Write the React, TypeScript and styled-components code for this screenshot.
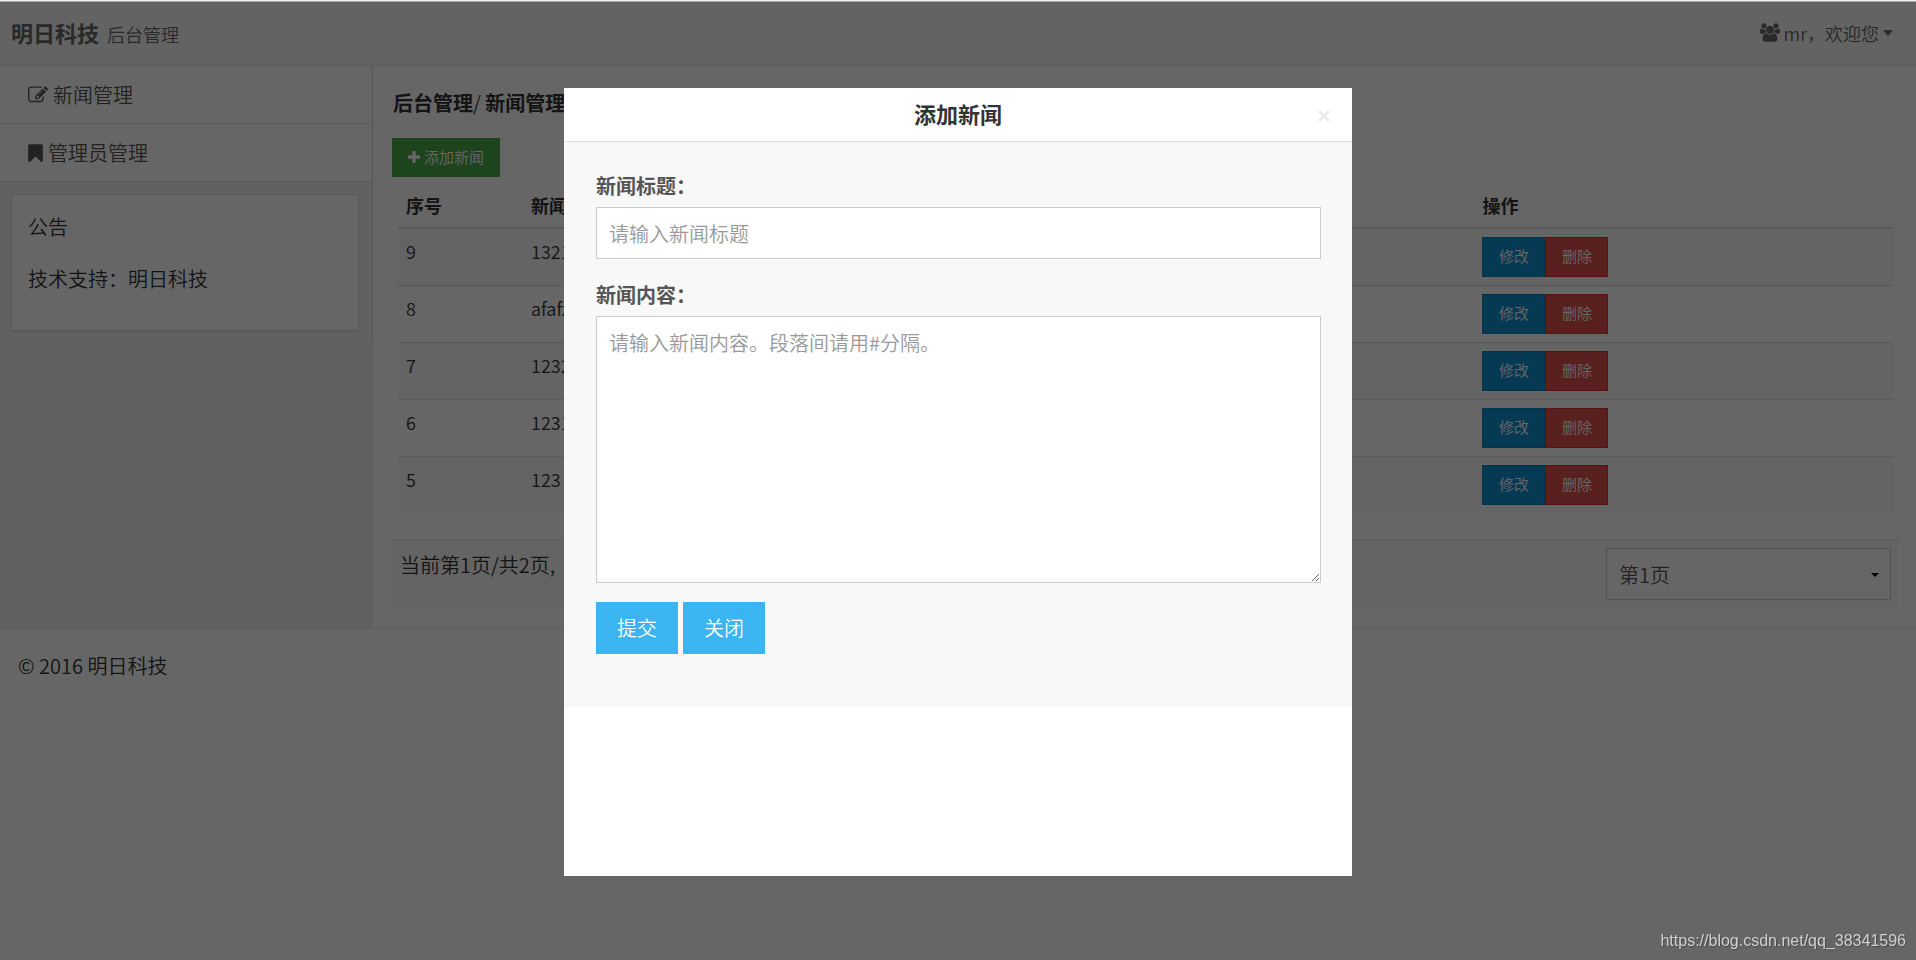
import React from 'react';
import styled, { createGlobalStyle } from 'styled-components';

const GlobalStyle = createGlobalStyle`
  *, *::before, *::after { box-sizing: border-box; }
  body {
    margin: 0;
    background: #fff;
    color: #333;
    font-family: "Noto Sans CJK SC", "Open Sans", sans-serif;
    font-size: 20px;
    font-weight: 350;
    line-height: 32px;
  }
  a { color: inherit; text-decoration: none; }
  button, input, textarea, select { font: inherit; border-radius: 0; }
`;

/* ---------- icons ---------- */

const Svg = styled.svg<{ $w: number; $h: number }>`
  width: ${p => p.$w}px;
  height: ${p => p.$h}px;
  fill: currentColor;
  flex: none;
`;

const EditIcon = () => (
  <Svg $w={20} $h={20} viewBox="0 0 1792 1792" aria-hidden="true">
    <path d="M888 1184l116-116-152-152-116 116v56h96v96h56zm440-720q-16-16-33 1l-350 350q-17 17-1 33t33-1l350-350q17-17 1-33zm80 594v190q0 119-84.500 203.500t-203.500 84.500h-832q-119 0-203.500-84.500t-84.500-203.500v-832q0-119 84.500-203.500t203.500-84.500h832q63 0 117 25 15 7 18 23 3 17-9 29l-49 49q-14 14-32 8-23-6-45-6h-832q-66 0-113 47t-47 113v832q0 66 47 113t113 47h832q66 0 113-47t47-113v-126q0-13 9-22l64-64q15-15 35-7t20 29zm-96-738l288 288-672 672h-288v-288zm444 132l-92 92-288-288 92-92q28-28 68-28t68 28l152 152q28 28 28 68t-28 68z" />
  </Svg>
);

const BookmarkIcon = () => (
  <Svg $w={15} $h={18} viewBox="256 100 1280 1560" aria-hidden="true">
    <path d="M1420 128q23 0 44 9 33 13 52.500 41t19.500 62v1289q0 34-19.500 62t-52.500 41q-19 8-44 8-48 0-83-32l-441-424-441 424q-36 33-83 33-23 0-44-9-33-13-52.500-41t-19.500-62v-1289q0-34 19.500-62t52.500-41q21-9 44-9h1048z" />
  </Svg>
);

const PlusIcon = () => (
  <Svg $w={12} $h={12} viewBox="192 128 1408 1408" aria-hidden="true">
    <path d="M1600 736v192q0 40-28 68t-68 28h-416v416q0 40-28 68t-68 28h-192q-40 0-68-28t-28-68v-416h-416q-40 0-68-28t-28-68v-192q0-40 28-68t68-28h416v-416q0-40 28-68t68-28h192q40 0 68 28t28 68v416h416q40 0 68 28t28 68z" />
  </Svg>
);

const UsersIcon = () => (
  <Svg $w={20} $h={19} viewBox="-64 0 1920 1792" aria-hidden="true">
    <path d="M529 896q-162 5-265 128h-134q-82 0-138-40.500t-56-118.500q0-353 124-353 6 0 43.500 21t97.500 42.500 119 21.500q67 0 133-23-5 37-5 66 0 139 81 256zm1071 637q0 120-73 189.500t-194 69.500h-874q-121 0-194-69.500t-73-189.500q0-53 3.500-103.500t14-109 26.500-108.500 43-97.500 62-81 85.500-53.500 111.500-20q10 0 43 21.500t73 48 107 48 135 21.500 135-21.500 107-48 73-48 43-21.500q61 0 111.500 20t85.500 53.500 62 81 43 97.500 26.500 108.500 14 109 3.500 103.500zm-1024-1277q0 106-75 181t-181 75-181-75-75-181 75-181 181-75 181 75 75 181zm704 384q0 159-112.500 271.500t-271.500 112.500-271.500-112.500-112.500-271.500 112.500-271.500 271.500-112.500 271.500 112.500 112.500 271.500zm576 225q0 78-56 118.500t-138 40.500h-134q-103-123-265-128 81-117 81-256 0-29-5-66 66 23 133 23 59 0 119-21.500t97.500-42.500 43.500-21q124 0 124 353zm-128-609q0 106-75 181t-181 75-181-75-75-181 75-181 181-75 181 75 75 181z" />
  </Svg>
);

const CaretIcon = ({ w, h }: { w: number; h: number }) => (
  <Svg $w={w} $h={h} viewBox="0 0 10 6" preserveAspectRatio="none" aria-hidden="true">
    <path d="M0 0h10L5 6z" />
  </Svg>
);

const CloseIcon = () => (
  <Svg $w={12} $h={12} viewBox="0 0 12 12" aria-hidden="true">
    <path d="M1 1l10 10M11 1L1 11" stroke="currentColor" strokeWidth="3" />
  </Svg>
);

/* ---------- page frame ---------- */

const TopStrip = styled.div`
  position: relative;
  z-index: 20;
  height: 2px;
  background: #f1f1f1;
  border-bottom: 1px solid #aaa;
`;

const Header = styled.header`
  display: flex;
  align-items: center;
  justify-content: space-between;
  height: 64px;
  padding: 0 23px 2px 11px;
  background: #f8f8f8;
  border-bottom: 1px solid #dedede;
  color: #666;
`;

const Brand = styled.div`
  display: flex;
  align-items: baseline;
  gap: 8px;
  font-size: 18px;
  strong { font-size: 22px; font-weight: 700; }
`;

const UserMenu = styled.a`
  display: flex;
  align-items: center;
  gap: 4px;
  font-size: 18px;
  line-height: 30px;
`;

const Columns = styled.div`
  display: flex;
  border-bottom: 1px solid #eee;
`;

const Sidebar = styled.aside`
  flex: none;
  width: 373px;
  background: #f3f3f3;
`;

const SidebarInner = styled.div`
  padding-bottom: 12px;
  border-right: 1px solid #d4d4d4;
`;

const Menu = styled.ul`
  margin: 0;
  padding: 0;
  list-style: none;
`;

const MenuLink = styled.a`
  display: flex;
  align-items: center;
  gap: 5px;
  height: 58px;
  padding: 0 28px;
  background: #fff;
  border-bottom: 1px solid #dedede;
  color: #555;
`;

const Notice = styled.section`
  margin: 12px 13px 0 11px;
  padding: 16px;
  height: 137px;
  background: #fff;
  border: 1px solid #dedede;
  box-shadow: 0 1px 1px rgba(0, 0, 0, 0.05);
  p { margin: 0 0 20px; }
`;

const Main = styled.main`
  flex: 1;
  min-width: 0;
  padding: 21px 17px 20px 19px;
`;

const Crumbs = styled.div`
  margin-bottom: 19px;
  padding-left: 1px;
  strong { font-weight: 700; }
`;

/* ---------- buttons ---------- */

const Button = styled.button<{ $bg: string; $line?: string; $size?: 'small' | 'large' }>`
  display: inline-flex;
  align-items: center;
  justify-content: center;
  gap: 4px;
  min-width: 63px;
  height: ${p => (p.$size === 'large' ? 52 : 40)}px;
  padding: ${p => (p.$size === 'large' ? '0 20px' : '0 15px 2px')};
  background: ${p => p.$bg};
  border: 1px solid ${p => p.$line ?? p.$bg};
  color: #fff;
  font-size: ${p => (p.$size === 'large' ? 20 : 15)}px;
  line-height: 24px;
  white-space: nowrap;
`;

const AddButton = styled(Button)`
  display: flex;
  height: 39px;
`;

const ButtonPair = styled.div`
  display: flex;
`;

/* ---------- news table ---------- */

const TableWrap = styled.div`
  padding: 0 6px;
`;

const Table = styled.table`
  width: 100%;
  table-layout: fixed;
  border-collapse: separate;
  border-spacing: 0;
  font-size: 18px;
  line-height: 28px;
  th, td { padding: 8px; text-align: left; vertical-align: top; }
  th { padding: 14px 8px 8px; font-weight: 700; border-bottom: 2px solid #dedede; }
  th:first-child { width: 125px; }
  th:last-child { width: 28%; }
  tbody tr:nth-child(odd) { background: #f9f9f9; }
  tbody tr + tr td { border-top: 1px solid #dedede; }
`;

const Pager = styled.div`
  display: flex;
  justify-content: space-between;
  margin-top: 26px;
  padding: 8px;
  background: #fafafa;
  border-top: 1px solid #dedede;
`;

const PageInfo = styled.span`
  padding-top: 1px;
`;

const SelectBox = styled.div`
  position: relative;
  width: 285px;
  svg { position: absolute; right: 12px; top: 25px; color: #000; }
`;

const Select = styled.select`
  display: block;
  width: 100%;
  height: 52px;
  padding: 2px 12px 0;
  appearance: none;
  background: #fff;
  border: 1px solid #ccc;
  color: #555;
`;

const Footer = styled.footer`
  padding: 21px 18px;
`;

/* ---------- dialog ---------- */

const Dimmer = styled.div`
  position: fixed;
  inset: 2px 0 0;
  z-index: 10;
  display: flex;
  align-items: center;
  justify-content: center;
  padding-top: 2px;
  background: rgba(0, 0, 0, 0.6);
`;

const Dialog = styled.div`
  display: flex;
  flex-direction: column;
  width: 788px;
  min-height: 788px;
  background: #fff;
`;

const DialogHead = styled.div`
  display: grid;
  grid-template-columns: 32px 1fr 32px;
  align-items: center;
  height: 54px;
  padding: 0 12px;
  border-bottom: 1px solid #dedede;
  h2 {
    grid-column: 2;
    margin: 0;
    padding-bottom: 4px;
    font-size: 22px;
    font-weight: 700;
    text-align: center;
  }
`;

const CloseButton = styled.button`
  display: flex;
  align-items: center;
  justify-content: center;
  height: 32px;
  padding: 2px 0 0;
  background: none;
  border: 0;
  color: #ebebeb;
`;

const Form = styled.form`
  padding: 28px 31px 53px 32px;
  background: #f8f8f8;
  color: #555;
`;

const Label = styled.label`
  display: block;
  margin-bottom: 5px;
  font-weight: 700;
`;

const Input = styled.input`
  display: block;
  width: 100%;
  height: 52px;
  margin-bottom: 20px;
  padding: 0 12px;
  background: #fff;
  border: 1px solid #ccc;
  &::placeholder { color: #999; }
`;

const TextArea = styled.textarea`
  display: block;
  width: 100%;
  height: 267px;
  margin-bottom: 19px;
  padding: 10px 12px;
  background: #fff;
  border: 1px solid #ccc;
  resize: vertical;
  &::placeholder { color: #999; }
`;

const Actions = styled.div`
  display: flex;
  gap: 5px;
`;

const Watermark = styled.div`
  position: fixed;
  right: 10px;
  bottom: 8px;
  z-index: 15;
  color: #d0d0d0;
  font: 400 16px/22px "Liberation Sans", Arial, sans-serif;
  text-shadow: 1px 1px 1px rgba(0, 0, 0, 0.3);
`;

const news = [
  { id: 9, title: '1321' },
  { id: 8, title: 'afafz' },
  { id: 7, title: '1232' },
  { id: 6, title: '1231' },
  { id: 5, title: '123' },
];

export default function App() {
  return (
    <>
      <GlobalStyle />
      <TopStrip />
      <Header>
        <Brand>
          <strong>明日科技</strong>
          <span>后台管理</span>
        </Brand>
        <UserMenu href="#user">
          <UsersIcon />
          <span>mr，欢迎您</span>
          <CaretIcon w={10} h={6} />
        </UserMenu>
      </Header>
      <Columns>
        <Sidebar>
          <SidebarInner>
            <Menu>
              <li><MenuLink href="#news"><EditIcon />新闻管理</MenuLink></li>
              <li><MenuLink href="#admins"><BookmarkIcon />管理员管理</MenuLink></li>
            </Menu>
            <Notice>
              <p>公告</p>
              <p>技术支持：明日科技</p>
            </Notice>
          </SidebarInner>
        </Sidebar>
        <Main>
          <Crumbs><strong>后台管理</strong>/ <strong>新闻管理</strong></Crumbs>
          <AddButton type="button" $bg="#4aaa4a"><PlusIcon />添加新闻</AddButton>
          <TableWrap>
            <Table>
              <thead>
                <tr><th>序号</th><th>新闻标题</th><th>操作</th></tr>
              </thead>
              <tbody>
                {news.map(item => (
                  <tr key={item.id}>
                    <td>{item.id}</td>
                    <td>{item.title}</td>
                    <td>
                      <ButtonPair>
                        <Button type="button" $bg="#0e90d2" $line="#0c80ba">修改</Button>
                        <Button type="button" $bg="#dd514c" $line="#d7342e">删除</Button>
                      </ButtonPair>
                    </td>
                  </tr>
                ))}
              </tbody>
            </Table>
          </TableWrap>
          <Pager>
            <PageInfo>当前第1页/共2页,</PageInfo>
            <SelectBox>
              <Select aria-label="页码" defaultValue="1">
                <option value="1">第1页</option>
                <option value="2">第2页</option>
              </Select>
              <CaretIcon w={8} h={4} />
            </SelectBox>
          </Pager>
        </Main>
      </Columns>
      <Footer>© 2016 明日科技</Footer>

      <Dimmer>
        <Dialog role="dialog" aria-modal="true" aria-labelledby="dialog-title">
          <DialogHead>
            <h2 id="dialog-title">添加新闻</h2>
            <CloseButton type="button" aria-label="关闭"><CloseIcon /></CloseButton>
          </DialogHead>
          <Form onSubmit={e => e.preventDefault()}>
            <Label htmlFor="news-title">新闻标题：</Label>
            <Input id="news-title" placeholder="请输入新闻标题" />
            <Label htmlFor="news-content">新闻内容：</Label>
            <TextArea id="news-content" placeholder="请输入新闻内容。段落间请用#分隔。" />
            <Actions>
              <Button type="submit" $bg="#3bb4f2" $size="large">提交</Button>
              <Button type="button" $bg="#3bb4f2" $size="large">关闭</Button>
            </Actions>
          </Form>
        </Dialog>
      </Dimmer>
      <Watermark>https://blog.csdn.net/qq_38341596</Watermark>
    </>
  );
}
